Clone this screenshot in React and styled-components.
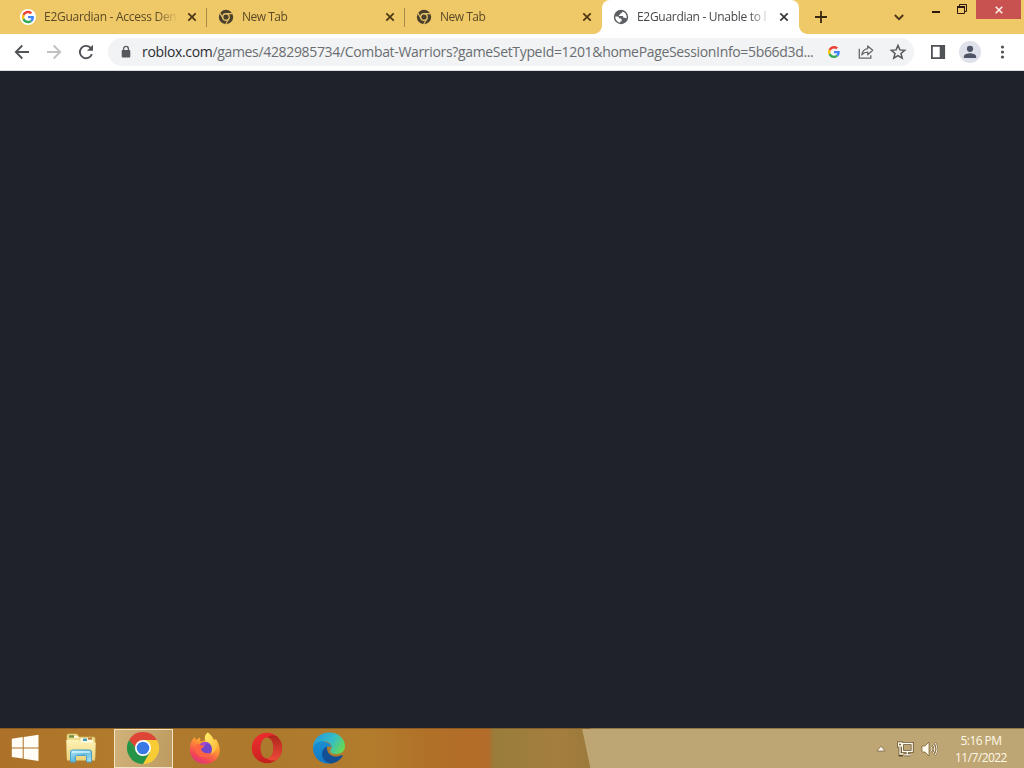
import React from 'react';
import styled, { createGlobalStyle } from 'styled-components';

const GlobalStyle = createGlobalStyle`
  * {
    box-sizing: border-box;
  }
  body {
    margin: 0;
    overflow: hidden;
    font-family: 'Open Sans', 'Noto Sans', sans-serif;
  }
  svg {
    display: block;
    flex: none;
  }
`;

const Screen = styled.div`
  display: flex;
  flex-direction: column;
  width: 1024px;
  height: 768px;
  background: #20222b;
`;

/* tab strip */
const TabStrip = styled.div`
  display: flex;
  height: 34px;
  padding-left: 9px;
  background: #efc867;
`;

const Tab = styled.div`
  position: relative;
  display: flex;
  align-items: center;
  width: ${({ $width }) => $width || 198}px;
  height: 34px;
  padding: 0 10px 0 11px;
  border-radius: ${({ $active }) => ($active ? '8px 8px 0 0' : '0')};
  background: ${({ $active }) => ($active ? '#fff' : 'transparent')};
  color: ${({ $active }) => ($active ? '#45474a' : '#5b4a26')};

  /* curved feet of the selected tab */
  &::before,
  &::after {
    content: '';
    display: ${({ $active }) => ($active ? 'block' : 'none')};
    position: absolute;
    bottom: 0;
    width: 8px;
    height: 8px;
  }
  &::before {
    left: -8px;
    background: radial-gradient(circle at 0 0, transparent 7.5px, #fff 8px);
  }
  &::after {
    right: -8px;
    background: radial-gradient(circle at 100% 0, transparent 7.5px, #fff 8px);
  }
`;

const TabDivider = styled.span`
  position: absolute;
  right: 0;
  top: 8px;
  width: 1px;
  height: 19px;
  background: #a48a49;
`;

const TabTitle = styled.span`
  flex: 1;
  margin: 0 8px 0 8px;
  white-space: nowrap;
  font-size: 12px;
  line-height: 18px;
  letter-spacing: ${({ $spacing }) => $spacing || 0}px;
  mask-image: linear-gradient(90deg, #000 112px, transparent 134px);
`;

const NewTabButton = styled.div`
  display: flex;
  align-items: center;
  margin-left: 16px;
`;

const WindowControls = styled.div`
  display: flex;
  align-items: flex-start;
  margin-left: auto;
`;

const ControlSlot = styled.div`
  display: flex;
  align-items: center;
  justify-content: center;
  width: ${({ $width }) => $width}px;
  height: ${({ $height }) => $height || 19}px;
`;

const CloseWindow = styled(ControlSlot)`
  margin: 0 3px 0 12px;
  background: #c85250;
`;

/* toolbar */
const Toolbar = styled.div`
  display: flex;
  align-items: center;
  height: 37px;
  padding: 0 12px 0 12px;
  background: #fff;
  border-bottom: 1px solid #d9dcdf;
`;

const NavButtons = styled.div`
  display: flex;
  gap: 12px;
`;

const AddressBar = styled.div`
  display: flex;
  align-items: center;
  width: 806px;
  height: 28px;
  margin-left: 12px;
  padding: 0 7px 0 13px;
  border-radius: 14px;
  background: #f1f3f4;
`;

const Url = styled.div`
  width: 674px;
  margin-left: 11px;
  white-space: nowrap;
  font-size: 14px;
  line-height: 20px;
  letter-spacing: ${({ $spacing }) => $spacing}px;
  color: #6a6d71;
`;

const Host = styled.span`
  color: #2d2f33;
`;

const AddressActions = styled.div`
  display: flex;
  align-items: center;
  gap: 14px;
  margin-left: auto;
`;

const ShareSlot = styled.div`
  margin-left: 3px;
`;

const BrowserActions = styled.div`
  display: flex;
  align-items: center;
  gap: 12px;
  margin-left: auto;
`;

const Avatar = styled.div`
  display: flex;
  align-items: center;
  justify-content: center;
  width: 22px;
  height: 22px;
  margin: 0 -1px 0 1px;
  border-radius: 50%;
  background: #dee1e9;
`;

const Page = styled.main`
  flex: 1;
  background: #20222b;
`;

/* taskbar, with the wallpaper showing through */
const Taskbar = styled.footer`
  display: flex;
  align-items: center;
  height: 40px;
  padding-right: 13px;
  border-top: 1px solid rgba(90, 62, 22, 0.45);
  background:
    linear-gradient(78deg, transparent 577px, #bda673 578px),
    linear-gradient(90deg, #ad7129 0, #b17a2c 110px, #ac792d 260px, #b27c2c 370px, #b17028 430px, #b36c29 488px, #9a7d3b 494px, #a47e3e 560px, #98793a 600px);
`;

const Launcher = styled.div`
  display: flex;
  align-items: center;
  justify-content: center;
  width: ${({ $width }) => $width || 62}px;
  height: 39px;
  padding-bottom: 2px;
`;

const ActiveLauncher = styled(Launcher)`
  width: 59px;
  margin: 0 1px 0 3px;
  padding: 0 2px 1px 0;
  border: 1px solid #f1e4c4;
  background: linear-gradient(100deg, #d0b27a, #bd9b60);
`;

const Tray = styled.div`
  display: flex;
  align-items: center;
  gap: 7px;
  margin-left: auto;
`;

const TrayCaret = styled.svg`
  margin-right: 4px;
`;

const Clock = styled.div`
  width: 60px;
  margin-left: 6px;
  text-align: center;
  white-space: nowrap;
  color: #fff8e8;
  font-size: 12px;
  line-height: 17px;
  letter-spacing: -0.55px;
`;

const GoogleIcon = ({ size = 16, badge }) => (
  <svg width={size} height={size} viewBox={badge ? '-7 -7 62 62' : '0 0 48 48'}>
    {badge && <circle cx="24" cy="24" r="31" fill="#fff" />}
    <path fill="#ea4335" d="M24 9.500c3.500 0 6.700 1.200 9.200 3.600l6.900-6.900C35.900 2.400 30.500 0 24 0 14.600 0 6.500 5.400 2.600 13.200l8 6.200C12.400 13.700 17.700 9.500 24 9.500z" />
    <path fill="#4285f4" d="M47 24.600c0-1.600-.2-3.100-.4-4.600H24v9h12.900c-.6 3-2.200 5.500-4.700 7.200l7.700 6C44.400 38 47 31.800 47 24.600z" />
    <path fill="#fbbc05" d="M10.500 28.600c-.5-1.500-.8-3-.8-4.600s.3-3.100.8-4.600l-8-6.200C.9 16.500 0 20.100 0 24s.9 7.500 2.600 10.800z" />
    <path fill="#34a853" d="M24 48c6.500 0 11.900-2.100 15.900-5.800l-7.700-6c-2.200 1.500-4.900 2.300-8.200 2.300-6.300 0-11.600-4.200-13.500-9.900l-8 6.200C6.500 42.600 14.600 48 24 48z" />
  </svg>
);

const ChromeMono = () => (
  <svg width="16" height="16" viewBox="0 0 24 24">
    <circle cx="12" cy="12" r="10.800" fill="#4a3f2a" />
    <circle cx="12" cy="12" r="4.900" fill="#4a3f2a" stroke="#e3c06a" strokeWidth="2" />
    <path d="M12 7h10M7.700 14.500l-5-8.700M16.300 14.500l-5 8.700" stroke="#e3c06a" strokeWidth="1.700" />
  </svg>
);

const GlobeIcon = () => (
  <svg width="16" height="16" viewBox="0 0 16 16">
    <circle cx="8" cy="8" r="7.200" fill="#5b5e62" />
    <path d="M9.400 2.500c.1 1.200-.7 1.700-1.800 1.700-.1 1.100-.6 1.600-1.600 1.700v1.200h3.100c.9 0 1.300.6 1.300 1.600h1.400c.8 0 1.200.4 1.600.9.200-.5.300-1.100.3-1.600 0-2.500-1.700-4.900-4.300-5.500zM2.300 7.500c-.1 3.100 1.900 5.700 4.900 6.200v-1.300h1.400v-1.700c0-.7-.4-1.100-1.100-1.100H6.300c0-1.300-.6-2-2-2.100z" fill="#fff" />
  </svg>
);

const CloseIcon = ({ color = '#4b3514' }) => (
  <svg width="10" height="10" viewBox="0 0 10 10">
    <path d="M1.300 1.300l7.400 7.400M8.700 1.300L1.300 8.700" stroke={color} strokeWidth="1.700" />
  </svg>
);

const BackIcon = ({ color = '#505357', flip }) => (
  <svg width="20" height="20" viewBox="0 0 20 20" transform={flip ? 'scale(-1 1)' : undefined}>
    <path d="M17 10H4M10.300 3.500L3.800 10l6.500 6.500" fill="none" stroke={color} strokeWidth="1.800" />
  </svg>
);

const ReloadIcon = () => (
  <svg width="20" height="20" viewBox="0 0 20 20">
    <path d="M15.900 12.200A6.200 6.200 0 1 1 14.500 5.700L16 7.300" fill="none" stroke="#505357" strokeWidth="1.900" />
    <path d="M17 2.800v6h-6z" fill="#505357" />
  </svg>
);

const LockIcon = () => (
  <svg width="10" height="14" viewBox="0 0 10 14">
    <rect x=".7" y="5" width="8.600" height="7.500" rx="1" fill="#55585c" />
    <path d="M2.600 5.500V3.700a2.400 2.400 0 0 1 4.800 0v1.800" fill="none" stroke="#55585c" strokeWidth="1.300" />
  </svg>
);

const ShareIcon = () => (
  <svg width="18" height="18" viewBox="0 0 18 18">
    <path d="M2.300 5.700v9.500h11.500v-3" fill="none" stroke="#65686c" strokeWidth="1.300" />
    <path d="M10.700 2.900l5 4.400-5 4.400V9.200c-2.600 0-4.300.8-5.900 2.700.5-3.500 2.500-5.800 5.900-6.300z" fill="none" stroke="#65686c" strokeWidth="1.300" strokeLinejoin="round" />
  </svg>
);

const StarIcon = () => (
  <svg width="18" height="18" viewBox="0 0 18 18">
    <path d="M9 2.500l1.900 4.400 4.800.4-3.700 3.100 1.200 4.700L9 12.600l-4.200 2.500L6 10.400 2.300 7.300l4.800-.4z" fill="none" stroke="#55585c" strokeWidth="1.500" />
  </svg>
);

const SidePanelIcon = () => (
  <svg width="16" height="16" viewBox="0 0 16 16">
    <path d="M1.900 1.900h12.300v12.200H1.900z" fill="none" stroke="#505357" strokeWidth="1.800" />
    <path d="M9.700 1.500H15v13H9.700z" fill="#505357" />
  </svg>
);

const PersonIcon = () => (
  <svg width="14" height="14" viewBox="0 0 13 13">
    <circle cx="6.500" cy="3.500" r="2.900" fill="#4e5467" />
    <path d="M.8 12v-1.400c0-2 3.500-3 5.700-3s5.700 1 5.700 3V12z" fill="#4e5467" />
  </svg>
);

const MenuDots = () => (
  <svg width="20" height="16" viewBox="0 0 20 16">
    <circle cx="10.500" cy="3" r="1.600" fill="#505357" />
    <circle cx="10.500" cy="8" r="1.600" fill="#505357" />
    <circle cx="10.500" cy="13" r="1.600" fill="#505357" />
  </svg>
);

const WindowsIcon = () => (
  <svg width="28" height="28" viewBox="0 0 28 28">
    <path d="M.8 4.800l10.900-1.700v10.300H.8zM12.700 2.900L27.500.8v12.600H12.700zM.8 14.400h10.900v10.200L.8 23zM12.700 14.400h14.800V27l-14.800-2.200z" fill="#fffdf6" />
  </svg>
);

const ExplorerIcon = () => (
  <svg width="34" height="32" viewBox="0 0 34 32">
    <path d="M3 3.500q0-1.500 1.500-1.500H13l2 3h14.500q1.500 0 1.500 1.500V26H3z" fill="#eedc8c" stroke="#cfb75e" strokeWidth=".7" />
    <path d="M5 3.200h5v2.500H5z" fill="#6d9145" />
    <path d="M10 4h4l1 2h-5z" fill="#fff7d6" />
    <path d="M17 6h6l2 2h4v3H16z" fill="#fff8df" />
    <path d="M19 6.500h4v2.500h-4z" fill="#459bb5" />
    <path d="M24 5.500h4v2h-4z" fill="#b7793c" />
    <path d="M2.300 8h12l2 2.500h15.400L31 28.500H3z" fill="url(#folder)" />
    <path d="M6.500 30V20q0-2 2-2h17q2 0 2 2v10h-5v-5.500q0-1-1-1h-9q-1 0-1 1V30z" fill="url(#stand)" stroke="#4ba1c9" />
    <path d="M8 20h18" stroke="#d6f4fc" strokeWidth="1.500" />
    <defs>
      <linearGradient id="folder" x1="0" y1="0" x2="0" y2="1">
        <stop stopColor="#fff3b6" />
        <stop offset="1" stopColor="#ead27b" />
      </linearGradient>
      <linearGradient id="stand" x1="0" y1="0" x2="1" y2="1">
        <stop stopColor="#b9e8f6" />
        <stop offset=".5" stopColor="#63bbe0" />
        <stop offset="1" stopColor="#b5e7f3" />
      </linearGradient>
    </defs>
  </svg>
);

const ChromeIcon = () => (
  <svg width="32" height="32" viewBox="0 0 32 32">
    <path d="M16 16L2.140 8A16 16 0 0 1 29.860 8z" fill="#df4536" />
    <path d="M16 8h13.860A16 16 0 0 1 16 32l6.930-12z" fill="#f8cc35" />
    <path d="M2.140 8A16 16 0 0 0 16 32l6.930-12L16 16 9.070 20z" fill="#269447" />
    <path d="M2.140 8l6.930 12L16 8z" fill="#269447" />
    <path d="M2.140 8h13.860v8H9z" fill="#df4536" />
    <circle cx="16" cy="16" r="8" fill="#fff" />
    <circle cx="16" cy="16" r="6.300" fill="#3979e6" />
  </svg>
);

const FirefoxIcon = () => (
  <svg width="32" height="32" viewBox="0 0 32 32">
    <defs>
      <linearGradient id="fox" x1=".8" y1="0" x2=".3" y2="1">
        <stop stopColor="#ffdf42" />
        <stop offset=".45" stopColor="#ff9633" />
        <stop offset=".8" stopColor="#f34853" />
        <stop offset="1" stopColor="#dd3580" />
      </linearGradient>
      <linearGradient id="foxtail" x1="0" y1="0" x2="1" y2="1">
        <stop stopColor="#fff36b" />
        <stop offset="1" stopColor="#ffae36" />
      </linearGradient>
    </defs>
    <path d="M3 8.500L5.500 5l1.600 3L11 5.500l.5 4 6-1.500 1-7.500c3 2 5.200 4.700 6.400 7.400l2-.9c3.500 5 5 11.200 2.700 16.500C27.400 29 22.200 31.800 16 31.800 7.500 31.800.8 26 .8 17.500c0-3.500.7-6.500 2.200-9z" fill="url(#fox)" />
    <path d="M18.500.5c-3 3-3.700 6.400-1 9.500 4 3 6.500 7 4.500 12 5-2 8-8 5.500-14l-2.600-.1C23.500 5 21.500 2.500 18.500.5z" fill="url(#foxtail)" />
    <circle cx="16" cy="17" r="7" fill="#7247cd" />
    <path d="M10 15c2-5 7-6.500 11-3.500-3-.6-4.500.2-5 2l-5 4.500z" fill="#a44ace" />
    <path d="M7 13c2-1 4-1 6 .4l2.500.2c0 1.500-2.500 1.700-3.500 3.500.7 3.500 5.500 5.500 9.500 3.400-2 5.500-10.500 6-13.500 1.500C6.300 18.900 6.300 16 7 13z" fill="#ff6542" />
  </svg>
);

const OperaIcon = () => (
  <svg width="32" height="32" viewBox="0 0 32 32">
    <defs>
      <linearGradient id="opera" x1="0" y1="0" x2=".5" y2="1">
        <stop stopColor="#f42f31" />
        <stop offset="1" stopColor="#c2201d" />
      </linearGradient>
      <linearGradient id="operaIn" x1="0" y1="0" x2="0" y2="1">
        <stop stopColor="#ad251c" />
        <stop offset="1" stopColor="#f04a38" />
      </linearGradient>
    </defs>
    <path fillRule="evenodd" d="M16 .8a15.200 15.200 0 1 0 0 30.400A15.200 15.200 0 0 0 16 .8zm0 4.700c3.700 0 6.500 4.600 6.500 10.500S19.700 26.500 16 26.500 9.500 21.900 9.500 16 12.300 5.500 16 5.500z" fill="url(#opera)" />
    <path d="M16 5.500c2-2 6-2.700 9.500-1.500 7.400 6.200 7.400 17.800 0 24-3.500 1.200-7.500.5-9.500-1.500 3.700 0 6.500-4.600 6.500-10.500S19.700 5.500 16 5.500z" fill="url(#operaIn)" />
  </svg>
);

const EdgeIcon = () => (
  <svg width="34" height="32" viewBox="0 0 34 32">
    <defs>
      <linearGradient id="edgeTop" x1="0" y1=".3" x2="1" y2=".7">
        <stop stopColor="#279bd9" />
        <stop offset=".55" stopColor="#36bec6" />
        <stop offset="1" stopColor="#6bdb4d" />
      </linearGradient>
      <linearGradient id="edgeBody" x1="0" y1="0" x2="0" y2="1">
        <stop stopColor="#198fd0" />
        <stop offset="1" stopColor="#1378c8" />
      </linearGradient>
    </defs>
    <path d="M1 16C1 7 8 .5 17 .5c9.500 0 16 6.200 16 13.500 0 5-3.500 8-8.500 8-4 0-6.300-1.500-6.300-2.800 0-1 1.400-1.500 1.400-4 0-3-2.800-5.700-7-5.700C7 9.500 3 12.500 1 16z" fill="url(#edgeTop)" />
    <path d="M1 16c1.500-4.500 5.500-7.300 10.300-6.500 4.300.6 7.500 2.600 8.300 5.500-3.300-1.500-7.200.3-8.200 4-1.100 5 2.500 10 7.600 12.300C9 33 1 25.500 1 16z" fill="url(#edgeBody)" />
    <path d="M15.200 14.400c-1.600 5.500 4.500 11.800 11.400 9.800 2-.6 3.100-1.300 3.800-1 .7.400.1 1.300-.7 2.300-3 3.900-7 6-11.500 6-5.500-1.500-8.600-6-8.100-10.800.3-3 2.300-5.200 5.100-6.300z" fill="#124f94" />
  </svg>
);

const NetworkIcon = () => (
  <svg width="17" height="16" viewBox="0 0 17 16">
    <path d="M5.500 2.500h9.700v8H5.500zM10.300 10.500v3M7 13.800h7M3 6v8h3M1.500 2h3v3h-3z" fill="none" stroke="#614a2c" strokeWidth="2.800" />
    <path d="M5.500 2.500h9.700v8H5.500zM10.300 10.500v3M7 13.800h7M3 6v7h3M1.500 2h3v3h-3z" fill="none" stroke="#fffbea" strokeWidth="1.300" />
  </svg>
);

const SpeakerIcon = () => (
  <svg width="17" height="16" viewBox="0 0 17 16">
    <path d="M1 5h3l4-4v14l-4-4H1z" fill="#fffbea" stroke="#705735" strokeWidth=".7" />
    <path d="M10 5.500q2 2.500 0 5M12 3.500q3.500 4.500 0 9M14 1.800q4 6.200 0 12.400" fill="none" stroke="#705735" strokeWidth="1.800" />
    <path d="M10 5.500q2 2.500 0 5M12 3.500q3.500 4.500 0 9M14 1.800q4 6.200 0 12.400" fill="none" stroke="#fffbea" strokeWidth="1" />
  </svg>
);

const tabs = [
  { title: 'E2Guardian - Access Den', icon: <GoogleIcon badge />, divider: true, spacing: -0.28 },
  { title: 'New Tab', icon: <ChromeMono />, divider: true, spacing: -0.5 },
  { title: 'New Tab', icon: <ChromeMono />, width: 197, spacing: -0.5 },
  { title: 'E2Guardian - Unable to l', icon: <GlobeIcon />, width: 197, active: true, spacing: -0.3 },
];

const App = () => (
  <>
    <GlobalStyle />
    <Screen>
      <TabStrip>
        {tabs.map((tab, i) => (
          <Tab key={i} $active={tab.active} $width={tab.width}>
            {tab.icon}
            <TabTitle $spacing={tab.spacing}>{tab.title}</TabTitle>
            <CloseIcon color={tab.active ? '#36383b' : undefined} />
            {tab.divider && <TabDivider />}
          </Tab>
        ))}
        <NewTabButton>
          <svg width="12" height="12" viewBox="0 0 12 12">
            <path d="M6 0v12M0 6h12" stroke="#38280f" strokeWidth="1.800" />
          </svg>
        </NewTabButton>
        <WindowControls>
          <ControlSlot $width={26} $height={34}>
            <svg width="10" height="7" viewBox="0 0 10 7">
              <path d="M.8 1l4.200 4.200L9.200 1" fill="none" stroke="#4b3514" strokeWidth="1.800" />
            </svg>
          </ControlSlot>
          <ControlSlot $width={48} $height={24}>
            <svg width="8" height="2">
              <path d="M0 1h8" stroke="#2d170c" strokeWidth="2" />
            </svg>
          </ControlSlot>
          <ControlSlot $width={4} $height={18}>
            <svg width="10" height="10" viewBox="0 0 10 10">
              <path d="M.5 2.500h7v7h-7zM2.500 2.500v-2h7v7h-2" fill="none" stroke="#2d170c" />
              <path d="M0 3h8" stroke="#2d170c" strokeWidth="2" />
            </svg>
          </ControlSlot>
          <CloseWindow $width={45}>
            <svg width="8" height="8" viewBox="0 0 8 8">
              <path d="M.7.700l6.600 6.600M7.300.7L.7 7.300" stroke="#fff4ec" strokeWidth="1.500" />
            </svg>
          </CloseWindow>
        </WindowControls>
      </TabStrip>

      <Toolbar>
        <NavButtons>
          <BackIcon />
          <BackIcon color="#bfc0c2" flip />
          <ReloadIcon />
        </NavButtons>
        <AddressBar>
          <LockIcon />
          <Url $spacing={-0.335}>
            <Host>roblox.com</Host>/games/4282985734/Combat-Warriors?gameSetTypeId=1201&amp;homePageSessionInfo=5b66d3d...
          </Url>
          <AddressActions>
            <GoogleIcon size={12} />
            <ShareSlot>
              <ShareIcon />
            </ShareSlot>
            <StarIcon />
          </AddressActions>
        </AddressBar>
        <BrowserActions>
          <SidePanelIcon />
          <Avatar>
            <PersonIcon />
          </Avatar>
          <MenuDots />
        </BrowserActions>
      </Toolbar>

      <Page />

      <Taskbar>
        <Launcher $width={50}>
          <WindowsIcon />
        </Launcher>
        <Launcher $width={61}>
          <ExplorerIcon />
        </Launcher>
        <ActiveLauncher>
          <ChromeIcon />
        </ActiveLauncher>
        <Launcher>
          <FirefoxIcon />
        </Launcher>
        <Launcher>
          <OperaIcon />
        </Launcher>
        <Launcher>
          <EdgeIcon />
        </Launcher>
        <Tray>
          <TrayCaret width="10" height="7" viewBox="0 0 10 7">
            <path d="M.8 6L5 1.200 9.200 6z" fill="#fffaf0" stroke="#81664a" strokeWidth=".8" />
          </TrayCaret>
          <NetworkIcon />
          <SpeakerIcon />
          <Clock>
            5:16 PM
            <br />
            11/7/2022
          </Clock>
        </Tray>
      </Taskbar>
    </Screen>
  </>
);

export default App;
